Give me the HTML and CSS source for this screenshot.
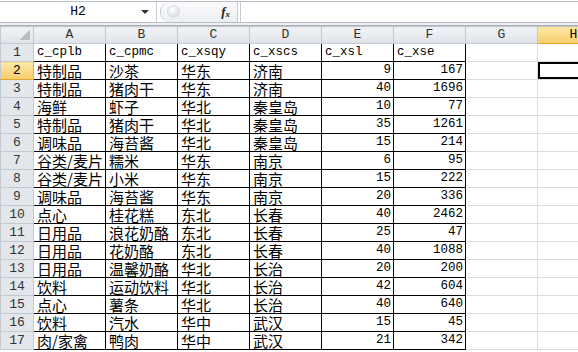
FILE: index.html
```html
<!DOCTYPE html>
<html lang="zh-CN">
<head>
    <meta charset="UTF-8">
    <title>Sheet1</title>
    <link rel="stylesheet" href="styles.css">
</head>
<body>
    <div class="formula-bar">
        <div class="name-box">H2<span class="arrow"></span></div>
        <div class="grip"><span class="knob"></span><span class="fx">f<sub>x</sub></span></div>
        <div class="formula"></div>
    </div>
    <div class="bar-gap"></div>

    <table class="sheet">
        <colgroup>
            <col class="c-rh">
            <col class="c"><col class="c"><col class="c"><col class="c">
            <col class="c"><col class="c"><col class="c"><col class="c">
        </colgroup>
        <thead>
            <tr>
                <th class="corner"></th>
                <th>A</th><th>B</th><th>C</th><th>D</th><th>E</th><th>F</th><th>G</th><th class="sel">H</th>
            </tr>
        </thead>
        <tbody>
            <tr><th class="rh">1</th><td class="d lat">c_cplb</td><td class="d lat">c_cpmc</td><td class="d lat">c_xsqy</td><td class="d lat">c_xscs</td><td class="d lat">c_xsl</td><td class="d lat">c_xse</td><td></td><td></td></tr>
            <tr><th class="rh sel">2</th><td class="d">特制品</td><td class="d">沙茶</td><td class="d">华东</td><td class="d">济南</td><td class="d n">9</td><td class="d n">167</td><td></td><td class="active"></td></tr>
            <tr><th class="rh">3</th><td class="d">特制品</td><td class="d">猪肉干</td><td class="d">华东</td><td class="d">济南</td><td class="d n">40</td><td class="d n">1696</td><td></td><td></td></tr>
            <tr><th class="rh">4</th><td class="d">海鲜</td><td class="d">虾子</td><td class="d">华北</td><td class="d">秦皇岛</td><td class="d n">10</td><td class="d n">77</td><td></td><td></td></tr>
            <tr><th class="rh">5</th><td class="d">特制品</td><td class="d">猪肉干</td><td class="d">华北</td><td class="d">秦皇岛</td><td class="d n">35</td><td class="d n">1261</td><td></td><td></td></tr>
            <tr><th class="rh">6</th><td class="d">调味品</td><td class="d">海苔酱</td><td class="d">华北</td><td class="d">秦皇岛</td><td class="d n">15</td><td class="d n">214</td><td></td><td></td></tr>
            <tr><th class="rh">7</th><td class="d">谷类/麦片</td><td class="d">糯米</td><td class="d">华东</td><td class="d">南京</td><td class="d n">6</td><td class="d n">95</td><td></td><td></td></tr>
            <tr><th class="rh">8</th><td class="d">谷类/麦片</td><td class="d">小米</td><td class="d">华东</td><td class="d">南京</td><td class="d n">15</td><td class="d n">222</td><td></td><td></td></tr>
            <tr><th class="rh">9</th><td class="d">调味品</td><td class="d">海苔酱</td><td class="d">华东</td><td class="d">南京</td><td class="d n">20</td><td class="d n">336</td><td></td><td></td></tr>
            <tr><th class="rh">10</th><td class="d">点心</td><td class="d">桂花糕</td><td class="d">东北</td><td class="d">长春</td><td class="d n">40</td><td class="d n">2462</td><td></td><td></td></tr>
            <tr><th class="rh">11</th><td class="d">日用品</td><td class="d">浪花奶酪</td><td class="d">东北</td><td class="d">长春</td><td class="d n">25</td><td class="d n">47</td><td></td><td></td></tr>
            <tr><th class="rh">12</th><td class="d">日用品</td><td class="d">花奶酪</td><td class="d">东北</td><td class="d">长春</td><td class="d n">40</td><td class="d n">1088</td><td></td><td></td></tr>
            <tr><th class="rh">13</th><td class="d">日用品</td><td class="d">温馨奶酪</td><td class="d">华北</td><td class="d">长治</td><td class="d n">20</td><td class="d n">200</td><td></td><td></td></tr>
            <tr><th class="rh">14</th><td class="d">饮料</td><td class="d">运动饮料</td><td class="d">华北</td><td class="d">长治</td><td class="d n">42</td><td class="d n">604</td><td></td><td></td></tr>
            <tr><th class="rh">15</th><td class="d">点心</td><td class="d">薯条</td><td class="d">华北</td><td class="d">长治</td><td class="d n">40</td><td class="d n">640</td><td></td><td></td></tr>
            <tr><th class="rh">16</th><td class="d">饮料</td><td class="d">汽水</td><td class="d">华中</td><td class="d">武汉</td><td class="d n">15</td><td class="d n">45</td><td></td><td></td></tr>
            <tr><th class="rh">17</th><td class="d">肉/家禽</td><td class="d">鸭肉</td><td class="d">华中</td><td class="d">武汉</td><td class="d n">21</td><td class="d n">342</td><td></td><td></td></tr>
        </tbody>
    </table>
</body>
</html>
```

FILE: styles.css
```css
body {
    margin: 0;
    padding: 0;
    width: 578px;
    height: 352px;
    overflow: hidden;
    background: #ffffff;
    font-family: "Noto Sans CJK SC", sans-serif;
}

/* formula bar */
.formula-bar {
    display: flex;
    height: 20px;
    border-top: 1px solid #b8bec8;
    border-bottom: 1px solid #b8bec8;
    background: #ffffff;
    margin-top: 1px;
}

.name-box {
    position: relative;
    width: 157px;
    border-right: 1px solid #c6cbd3;
    font-family: "Liberation Mono", monospace;
    font-size: 13px;
    line-height: 20px;
    text-align: center;
    color: #000;
    box-sizing: border-box;
}

.arrow {
    position: absolute;
    right: 7px;
    top: 8px;
    border-left: 4px solid transparent;
    border-right: 4px solid transparent;
    border-top: 4px solid #333;
}

.grip {
    position: relative;
    width: 78px;
    background: linear-gradient(#fbfbfc, #eceef2);
    border-right: 1px solid #c6cbd3;
    border-left: 1px solid #c6cbd3;
    border-radius: 9px 0 0 9px;
    margin-left: 3px;
    box-sizing: border-box;
}

.knob {
    position: absolute;
    left: 6px;
    top: 3px;
    width: 13px;
    height: 13px;
    border-radius: 50%;
    background: radial-gradient(circle at 40% 35%, #ffffff, #d2d6dc);
    border: 1px solid #d8dbe0;
    box-sizing: border-box;
}

.fx {
    position: absolute;
    right: 7px;
    top: 0;
    font-family: "Liberation Serif", serif;
    font-style: italic;
    font-weight: bold;
    font-size: 13px;
    line-height: 19px;
    color: #222;
}

.fx sub {
    font-size: 9px;
    vertical-align: -1px;
}

.formula {
    flex: 1;
    border-left: 1px solid #c6cbd3;
    margin-left: 2px;
}

.bar-gap {
    height: 2px;
    background: #eef0f3;
    border-bottom: 1px solid #a9aeb6;
}

/* grid */
.sheet {
    table-layout: fixed;
    border-collapse: collapse;
    width: 609px;
}

.c-rh {
    width: 33px;
}

.c {
    width: 72px;
}

.sheet th {
    height: 16px;
    padding: 0;
    background: linear-gradient(#f1f3f6, #dfe3e8);
    border: 1px solid #c4c9d1;
    font-family: "Liberation Mono", monospace;
    font-size: 13px;
    font-weight: normal;
    line-height: 16px;
    color: #333;
    text-align: center;
}

.sheet th.rh {
    background: #e3e7ec;
    vertical-align: bottom;
    line-height: 17px;
}

.sheet th.sel {
    background: linear-gradient(#fde9a8, #f7cc6a);
    border-bottom-color: #e0a737;
    border-right-color: #e0a737;
    color: #000;
}

.corner {
    position: relative;
}

.corner::after {
    content: "";
    position: absolute;
    right: 3px;
    bottom: 3px;
    width: 10px;
    height: 10px;
    background: linear-gradient(135deg, transparent 50%, #b9bdc3 50%);
}

.sheet td {
    height: 17px;
    padding: 0 2px 0 3px;
    border: 1px solid #dadcdd;
    font-size: 15px;
    line-height: 17px;
    vertical-align: bottom;
    white-space: nowrap;
    overflow: hidden;
    color: #000;
}

.sheet td.d {
    border-color: #000;
}

.sheet td.lat,
.sheet td.n {
    font-family: "Liberation Mono", monospace;
    font-size: 12.5px;
}

.sheet td.n {
    text-align: right;
}

.sheet td.active {
    overflow: visible;
    box-shadow: inset 0 0 0 2px #000;
}
```
